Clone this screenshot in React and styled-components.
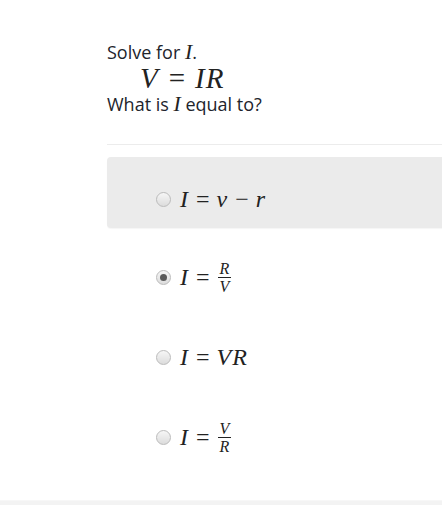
import React from "react";
import styled, { createGlobalStyle } from "styled-components";

const Global = createGlobalStyle`
  html, body { margin: 0; padding: 0; background: #fff; overflow: hidden; }
  body { font-family: "Open Sans", "Liberation Sans", sans-serif; color: #21242c; }
`;

const Page = styled.div`
  width: 442px;
  height: 505px;
  display: flex;
  flex-direction: column;
  overflow: hidden;
`;

const Content = styled.div`
  flex: 1;
  padding: 39px 0 0 107px;
  display: flex;
  flex-direction: column;
`;

const Question = styled.div`
  font-size: 18px;
  line-height: 26px;
  color: #21242c;
`;

const Line = styled.div`
  display: flex;
  align-items: baseline;
  height: 26px;
`;

const Display = styled.div`
  font-family: "Liberation Serif", "Times New Roman", serif;
  font-size: 29px;
  line-height: 26px;
  padding-left: 33px;
  height: 26px;
  display: flex;
  align-items: baseline;
  color: #222;
`;

const Var = styled.span`
  font-family: "Liberation Serif", "Times New Roman", serif;
  font-style: italic;
  font-size: 1.2em;
  color: #222;
`;

const Op = styled.span`
  font-family: "Liberation Serif", "Times New Roman", serif;
  margin: 0 ${(p) => p.$m || 7}px;
`;

const Divider = styled.div`
  height: 1px;
  background: #ececec;
  margin-top: 27px;
  margin-right: -20px;
`;

const Options = styled.div`
  display: flex;
  flex-direction: column;
  margin-top: 12px;
  margin-right: -20px;
`;

const Option = styled.div`
  height: ${(p) => p.$h}px;
  display: flex;
  align-items: center;
  padding-left: 49px;
  padding-top: ${(p) => p.$pt || 0}px;
  box-sizing: border-box;
  border-radius: 4px;
  background: ${(p) => (p.$hover ? "#ebebeb" : "transparent")};
  box-shadow: ${(p) => (p.$hover ? "0 1px 1px rgba(0,0,0,0.04)" : "none")};
`;

const Radio = styled.span`
  width: 15px;
  height: 15px;
  border-radius: 50%;
  box-sizing: border-box;
  border: 1px solid #bbb;
  background: linear-gradient(#f6f6f6, #dcdcdc);
  display: inline-flex;
  align-items: center;
  justify-content: center;
  margin-right: 9px;
  flex-shrink: 0;
  &::after {
    content: "";
    width: 7px;
    height: 7px;
    border-radius: 50%;
    background: #5a5a5a;
    display: ${(p) => (p.$checked ? "block" : "none")};
  }
`;

const Math = styled.span`
  font-family: "Liberation Serif", "Times New Roman", serif;
  font-size: 24px;
  display: inline-flex;
  align-items: center;
  color: #222;
`;

const MItalic = styled.span`
  font-style: italic;
  letter-spacing: 1px;
`;

const Frac = styled.span`
  display: inline-flex;
  flex-direction: column;
  align-items: center;
  font-size: 16px;
  font-style: italic;
  line-height: 15px;
  margin-left: 1px;
`;

const Num = styled.span`
  padding: 0 2px 1px;
  border-bottom: 1px solid #222;
`;

const Den = styled.span`
  padding: 1px 2px 0;
`;

const Footer = styled.div`
  height: 4px;
  background: #f3f3f3;
  border-top: 1px solid #f7f7f7;
`;

export default function App() {
  return (
    <Page>
      <Global />
      <Content>
        <Question>
          <Line>
            Solve for&nbsp;<Var>I</Var>.
          </Line>
          <Display>
            <MItalic>V</MItalic>
            <Op $m={10}>=</Op>
            <MItalic>IR</MItalic>
          </Display>
          <Line>
            What is&nbsp;<Var>I</Var>&nbsp;equal to?
          </Line>
        </Question>
        <Divider />
        <Options>
          <Option $hover $h={71} $pt={14}>
            <Radio />
            <Math>
              <MItalic>I</MItalic>
              <Op $m={7}>=</Op>
              <MItalic>v</MItalic>
              <Op $m={7}>−</Op>
              <MItalic>r</MItalic>
            </Math>
          </Option>
          <Option $h={80} $pt={18}>
            <Radio $checked />
            <Math>
              <MItalic>I</MItalic>
              <Op $m={7}>=</Op>
              <Frac>
                <Num>R</Num>
                <Den>V</Den>
              </Frac>
            </Math>
          </Option>
          <Option $h={80} $pt={18}>
            <Radio />
            <Math>
              <MItalic>I</MItalic>
              <Op $m={7}>=</Op>
              <MItalic>VR</MItalic>
            </Math>
          </Option>
          <Option $h={80} $pt={18}>
            <Radio />
            <Math>
              <MItalic>I</MItalic>
              <Op $m={7}>=</Op>
              <Frac>
                <Num>V</Num>
                <Den>R</Den>
              </Frac>
            </Math>
          </Option>
        </Options>
      </Content>
      <Footer />
    </Page>
  );
}
